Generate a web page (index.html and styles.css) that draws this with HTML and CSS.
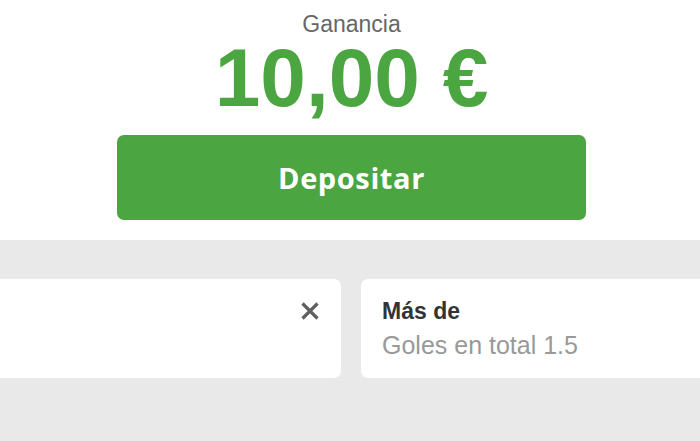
FILE: index.html
```html
<!DOCTYPE html>
<html lang="es">
<head>
<meta charset="utf-8">
<title>Ganancia</title>
<link rel="stylesheet" href="styles.css">
</head>
<body>
  <section class="summary">
    <div class="label">Ganancia</div>
    <div class="amount">10,00 €</div>
    <button class="deposit">Depositar</button>
  </section>
  <section class="bets">
    <div class="card card-first">
      <svg class="close" viewBox="0 0 20 20" width="20" height="20" aria-hidden="true">
        <path d="M2.5 2.5 L17.5 17.5 M17.5 2.5 L2.5 17.5" stroke="#5f5f5f" stroke-width="3.2" stroke-linecap="butt" fill="none"/>
      </svg>
    </div>
    <div class="card">
      <div class="card-title">Más de</div>
      <div class="card-sub">Goles en total 1.5</div>
    </div>
  </section>
</body>
</html>
```
FILE: styles.css
```css
html, body {
  margin: 0;
  padding: 0;
}
body {
  width: 700px;
  height: 441px;
  overflow: hidden;
  background: #e9e9e9;
  font-family: "Liberation Sans", Arial, sans-serif;
}
.summary {
  background: #ffffff;
  height: 240px;
  box-sizing: border-box;
  padding: 13px 114px 0 117px;
  display: flex;
  flex-direction: column;
  align-items: center;
}
.label {
  font-size: 23px;
  line-height: 23px;
  color: #666666;
}
.amount {
  font-size: 82px;
  line-height: 82px;
  font-weight: 700;
  color: #4ba541;
  margin-top: 1px;
}
.deposit {
  margin-top: 16px;
  width: 100%;
  height: 85px;
  border: 0;
  border-radius: 7px;
  background: #4ba541;
  color: #ffffff;
  font-family: "Open Sans", sans-serif;
  font-weight: 700;
  font-size: 29px;
  letter-spacing: 0.6px;
  display: flex;
  align-items: center;
  justify-content: center;
  padding: 0;
}
.bets {
  display: flex;
  gap: 20px;
  padding-top: 39px;
}
.card {
  flex: 0 0 400px;
  height: 99px;
  background: #ffffff;
  border-radius: 7px;
  box-sizing: border-box;
  padding: 20px 20px 0 21px;
}
.card-first {
  margin-left: -59px;
  display: flex;
  justify-content: flex-end;
  align-items: flex-start;
  padding: 22px 21px 0 0;
}
.close {
  display: block;
}
.card-title {
  font-size: 23px;
  line-height: 24px;
  font-weight: 700;
  color: #333333;
}
.card-sub {
  font-size: 25px;
  line-height: 28px;
  color: #999999;
  margin-top: 8px;
}
```
